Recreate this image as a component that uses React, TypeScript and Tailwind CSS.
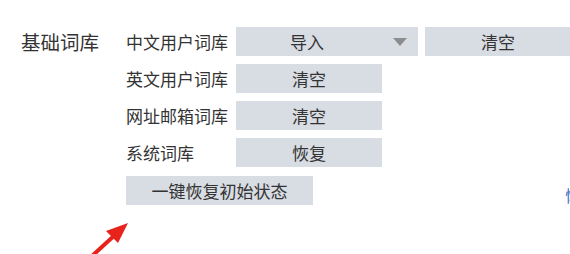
import React from "react";

const font = { fontFamily: '"Noto Sans CJK SC", "Noto Sans", sans-serif' };

function Btn({ children, w }: { children: React.ReactNode; w: string }) {
  return (
    <div className={`${w} h-[29px] bg-[#d8dce3] flex items-center justify-center text-[17px] text-[#333] shrink-0`}>
      {children}
    </div>
  );
}

export default function App() {
  return (
    <div
      className="w-[570px] h-[254px] bg-white relative overflow-hidden text-[#333]"
      style={font}
    >
      <div className="flex pt-[27px]">
        <div className="w-[126px] pl-[21px] h-[29px] flex items-center text-[19.5px] text-[#333] shrink-0">
          基础词库
        </div>
        <div className="flex flex-col gap-[8px]">
          <div className="flex items-center h-[29px]">
            <div className="w-[110px] text-[17px] shrink-0">中文用户词库</div>
            <div className="w-[182px] h-[29px] bg-[#d8dce3] flex items-center justify-between pl-[54px] pr-[11px] text-[17px] shrink-0">
              <span>导入</span>
              <svg width="14" height="8" viewBox="0 0 14 8">
                <polygon points="0,0 14,0 7,8" fill="#8c8c8c" />
              </svg>
            </div>
            <div className="w-[7px] shrink-0" />
            <Btn w="w-[146px]">清空</Btn>
          </div>
          <div className="flex items-center h-[29px]">
            <div className="w-[110px] text-[17px] shrink-0">英文用户词库</div>
            <Btn w="w-[146px]">清空</Btn>
          </div>
          <div className="flex items-center h-[29px]">
            <div className="w-[110px] text-[17px] shrink-0">网址邮箱词库</div>
            <Btn w="w-[146px]">清空</Btn>
          </div>
          <div className="flex items-center h-[29px]">
            <div className="w-[110px] text-[17px] shrink-0">系统词库</div>
            <Btn w="w-[146px]">恢复</Btn>
          </div>
          <div className="flex items-center h-[29px] mt-[1px]">
            <Btn w="w-[187px]">一键恢复初始状态</Btn>
          </div>
        </div>
      </div>
      <span className="absolute left-[565px] top-[183px] text-[16px] text-[#2f6fc9]">恢</span>
      <svg
        className="absolute left-[88px] top-[220px]"
        width="44"
        height="34"
        viewBox="0 0 44 34"
      >
        <line x1="4" y1="36" x2="28" y2="14" stroke="#e8231b" strokeWidth="4" />
        <polygon points="40,3 18,11 30,23" fill="#e8231b" />
      </svg>
    </div>
  );
}
